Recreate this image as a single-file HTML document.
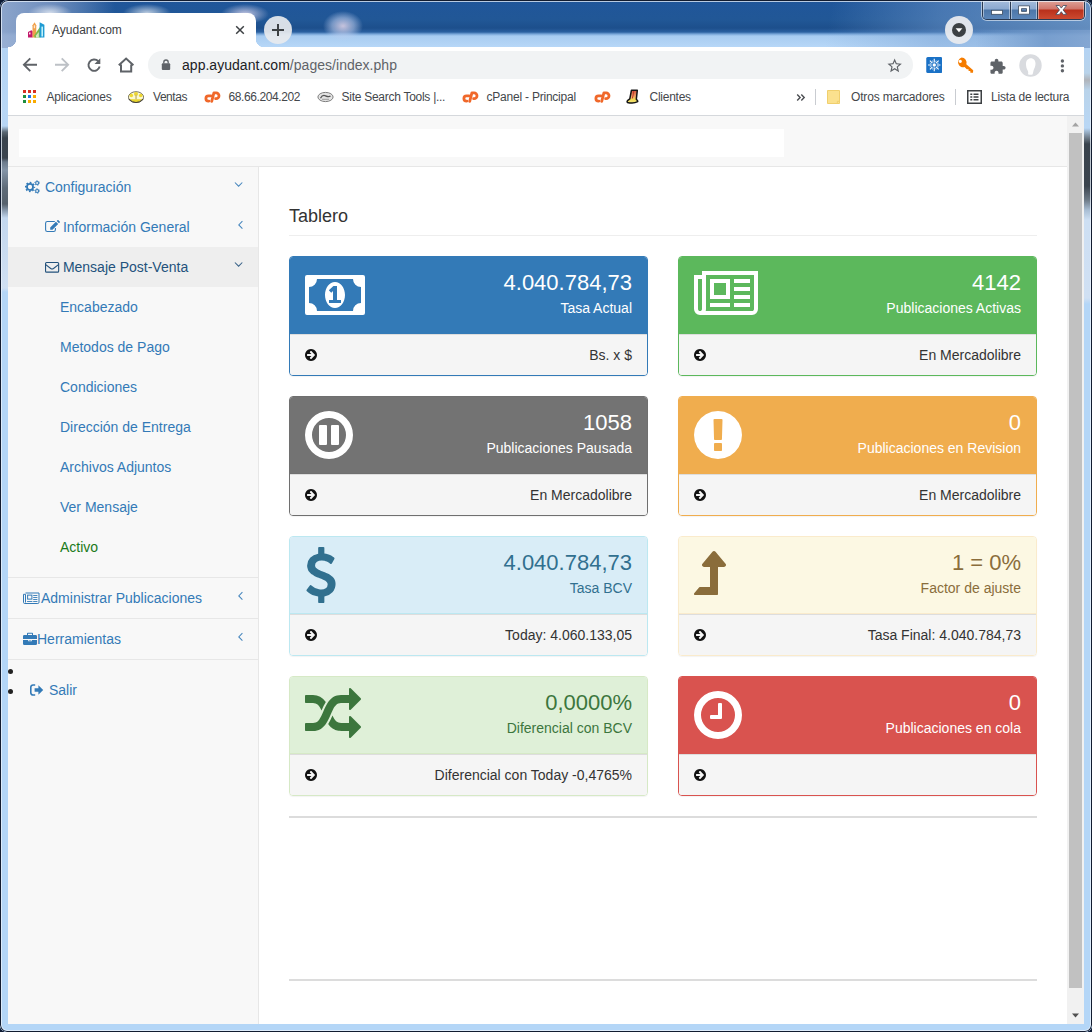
<!DOCTYPE html>
<html lang="es">
<head>
<meta charset="utf-8">
<title>Ayudant.com</title>
<style>
*{box-sizing:border-box}
html,body{margin:0;padding:0}
body{width:1092px;height:1032px;overflow:hidden;position:relative;background:#0d1a33;font-family:"Liberation Sans",sans-serif;font-size:14px;line-height:20px;color:#333}
ul{margin:0;padding:0}
a{text-decoration:none;color:#337ab7}
.abs{position:absolute}
/* ---------- window frame ---------- */
#frame{position:absolute;left:0;top:0;width:1092px;height:1032px;background:#b9d6f4;border-radius:8px 8px 7px 7px;overflow:hidden}
#fline{position:absolute;left:0;top:0;width:1092px;height:1032px;border-radius:8px 8px 7px 7px;box-shadow:inset 0 0 0 1px #121c30,inset 0 0 0 2px rgba(235,243,252,.75);pointer-events:none}
#title{position:absolute;left:0;top:0;width:1092px;height:48px;
 background:
  radial-gradient(ellipse 20px 15px at 343px 26px,rgba(228,215,235,.85) 0,rgba(190,205,238,.55) 55%,rgba(190,205,235,0) 100%),
  radial-gradient(ellipse 22px 9px at 50px 13px,rgba(255,255,255,.7) 0,rgba(255,255,255,0) 100%),
  radial-gradient(ellipse 24px 9px at 147px 13px,rgba(255,255,255,.7) 0,rgba(255,255,255,0) 100%),
  radial-gradient(ellipse 24px 10px at 245px 14px,rgba(250,235,250,.75) 0,rgba(255,255,255,0) 100%),
  linear-gradient(to right,rgba(150,172,208,.92) 0,rgba(125,152,196,.82) 55px,rgba(120,150,195,.45) 85px,rgba(120,150,200,0) 115px),
  linear-gradient(to right,rgba(110,150,200,0) 0,rgba(110,150,200,.8) 70px,rgba(125,160,205,.8) 100%) no-repeat 975px 30px / 117px 18px,
  linear-gradient(100deg,rgba(120,160,210,0) 820px,rgba(120,160,210,.45) 930px,rgba(150,185,225,.6) 1092px),
  linear-gradient(to bottom,#1b4d8b 0,#20569a 3px,#215796 20px,#1d4f8c 28px,#2a60a0 32px,#76a4d7 34px,#a8ccf1 36px,#b8d8f8 48px)}
#edgeL,#edgeR{position:absolute;top:48px;width:8px;height:984px}
#edgeL{left:0;background:linear-gradient(to bottom,#b3d3f4 0,#b9d7f5 60px,#b7d5f4 78px,#5b6874 84px,#39434d 90px,#3b444e 110px,#6b7a8b 114px,#8494a7 122px,#5f6b78 140px,#56616c 156px,#8e9fb3 163px,#c3d7ee 170px,#d0e0f3 240px,#b4d6f7 244px,#b4d6f7 100%)}
#edgeR{left:1084px;background:linear-gradient(to bottom,#b3d3f4 0,#b9d3ea 25px,#b0b4ba 32px,#b9d3ea 42px,#b9d7f5 80px,#6d7a87 90px,#39434d 96px,#3b444e 138px,#6d7a87 152px,#a8bdd3 162px,#cddff3 172px,#d0e0f3 250px,#b4d6f7 256px,#b4d6f7 100%)}
#edgeB{position:absolute;left:0;top:1024px;width:1092px;height:8px;background:#b4d6f7}
/* ---------- chrome ui ---------- */
#tab{position:absolute;left:16px;top:13px;width:240px;height:34px;background:#fff;border-radius:8px 8px 0 0}
#tab:before,#tab:after{content:"";position:absolute;bottom:0;width:8px;height:8px}
#tab:before{left:-8px;background:radial-gradient(circle at 0 0,transparent 8px,#fff 8.5px)}
#tab:after{right:-8px;background:radial-gradient(circle at 100% 0,transparent 8px,#fff 8.5px)}
#toolbar{position:absolute;left:8px;top:47px;width:1076px;height:69px;background:#fff;border-bottom:1px solid #d5d8dc}
.ui{font-family:"Liberation Sans",sans-serif;font-size:12px;line-height:16px;color:#44474b;white-space:nowrap;position:absolute}
#omni{position:absolute;left:148px;top:51px;width:765px;height:28px;border-radius:14px;background:#f1f3f4}
/* ---------- page ---------- */
#page{position:absolute;left:8px;top:116px;width:1059px;height:908px;background:#fff;overflow:hidden}
#sbar{position:absolute;left:1067px;top:116px;width:17px;height:908px;background:#f1f1f1}
#thumb{position:absolute;left:2px;top:17px;width:13px;height:855px;background:#c1c1c1}
#navbar{position:absolute;left:0;top:0;width:1059px;height:51px;background:#f8f8f8;border-bottom:1px solid #e7e7e7}
#brand{position:absolute;left:11px;top:13px;width:765px;height:28px;background:#fff}
#side{position:absolute;left:0;top:51px;width:251px;height:857px;background:#f8f8f8;border-right:1px solid #e7e7e7}
#main{position:absolute;left:251px;top:51px;width:808px;height:857px;background:#fff}

/* ---------- sidebar ---------- */
#side a{display:block;position:absolute;left:0;width:250px;height:40px;padding:10px 15px;line-height:20px;color:#337ab7;white-space:nowrap}
#side a.l2{padding-left:37px}
#side a.l3{padding-left:52px}
#side a.act{background:#eee;color:#23527c}
#side .ln{position:absolute;left:0;width:250px;height:1px;background:#e7e7e7}
#side svg{display:inline-block;vertical-align:top;fill:currentColor}
#side .fw{display:inline-block;width:18px;height:20px;text-align:center;vertical-align:top}
#side .arr{position:absolute;right:15px;top:10px;height:20px;text-align:right}
#side .dot{position:absolute;left:0;width:5px;height:5px;border-radius:50%;background:#222}
/* ---------- main ---------- */
#main h1{position:absolute;left:30px;top:39px;margin:0;width:748px;height:30px;font-size:18px;font-weight:normal;line-height:20px;color:#333;border-bottom:1px solid #eee;padding:0 0 9px}
.panel{position:absolute;width:359px;height:120px;border:1px solid;border-radius:4px;overflow:hidden;box-shadow:0 1px 1px rgba(0,0,0,.05)}
.ph{position:absolute;left:0;top:0;width:357px;height:77px;border-bottom:1px solid}
.pf{position:absolute;left:0;top:77px;width:357px;height:41px;background:#f5f5f5;border-top:1px solid #ddd;color:#333}
.pf span{position:absolute;right:15px;top:10px;line-height:20px;white-space:nowrap}
.pf svg{position:absolute;left:15px;top:14px}
.ph .huge{position:absolute;right:15px;top:10px;font-size:22px;line-height:31px;white-space:nowrap}
.ph .lbl{position:absolute;right:15px;top:41px;line-height:20px;white-space:nowrap}
.ph svg{position:absolute;fill:currentColor}
.hr{position:absolute;left:30px;width:748px;height:2px;background:#dcdcdc}

.ic{position:absolute;display:block}
.bm{top:89.3px}
.sep{position:absolute;top:89px;width:1px;height:16px;background:#c9ccd1}
#newtab{position:absolute;left:264px;top:16px;width:28px;height:28px;border-radius:50%;background:rgba(232,234,238,.92)}
#prof{position:absolute;left:945px;top:16px;width:28px;height:28px;border-radius:50%;background:rgba(232,234,238,.95)}
#wc{position:absolute;left:982px;top:0;width:103px;height:20px;border:1px solid #2a3a52;border-top:0;border-radius:0 0 5px 5px;box-shadow:0 0 0 1px rgba(255,255,255,.55);overflow:hidden}
#wc div{position:absolute;top:0;height:19px}
#wc .b1{left:0;width:28px;background:linear-gradient(to bottom,#a7bedd 0,#8ba9d0 9px,#4d76a8 10px,#5b86b9 19px);border-right:1px solid #2a3a52;box-shadow:inset 1px 0 0 rgba(255,255,255,.45),inset -1px 0 0 rgba(255,255,255,.45)}
#wc .b2{left:28px;width:27px;background:linear-gradient(to bottom,#a7bedd 0,#8ba9d0 9px,#4d76a8 10px,#5b86b9 19px);border-right:1px solid #2a3a52;box-shadow:inset 1px 0 0 rgba(255,255,255,.45),inset -1px 0 0 rgba(255,255,255,.45)}
#wc .b3{left:55px;width:46px;background:linear-gradient(to bottom,#e0a79d 0,#d0756a 9px,#b9301b 10px,#cc4a30 19px);box-shadow:inset 1px 0 0 rgba(255,255,255,.45),inset -1px 0 0 rgba(255,255,255,.35)}
</style>
</head>
<body>
<div id="frame">
 <div id="title"></div>
 <div id="edgeL"></div><div id="edgeR"></div><div id="edgeB"></div>
 <div id="tab"></div>
 <div id="toolbar"></div>
 <div id="omni"></div>

 <!-- tab -->
 <svg class="ic" style="left:28px;top:22px" width="17" height="16" viewBox="0 0 17 16"><path d="M0 15.500V10L3.400 8.200L4.700 9.300V15.500z" fill="#c2186b"/><rect x="1" y="10.500" width="1.500" height="1.900" fill="#fbe3ee"/><path d="M4.500 15.500V3.300L6.600 .3L8.300 3.300V15.500z" fill="#f0a04b"/><path d="M5.800 3.300h1.300v3h-1.300z" fill="#fbe6cf"/><path d="M6.400 15.500V13.300L11.700 5.300L12.500 6V15.500z" fill="#7cb945"/><path d="M8 15.500V13.500L10.800 10V15.500z" fill="#d3e9bf"/><path d="M11.600 15.500V.3L16.400 2.800V15.500z" fill="#1f9bd3"/><rect x="13.400" y="4.600" width="1.600" height="9.900" fill="#bff2fb"/></svg>
 <span class="ui" style="left:52px;top:21.500px;color:#3c4043">Ayudant.com</span>
 <svg class="ic" style="left:235px;top:25px" width="10" height="10" viewBox="0 0 10 10"><path d="M1.200 1.200L8.800 8.800M8.800 1.200L1.200 8.800" stroke="#3c4043" stroke-width="1.500" fill="none"/></svg>
 <div id="newtab"><svg class="ic" style="left:7px;top:7px" width="14" height="14" viewBox="0 0 14 14"><path d="M7 1V13M1 7H13" stroke="#3c4043" stroke-width="2" fill="none"/></svg></div>
 <div id="prof"><svg class="ic" style="left:7px;top:7px" width="14" height="14" viewBox="0 0 14 14"><circle cx="7" cy="7" r="7" fill="#3c4043"/><path d="M3.600 5.200H10.400L7 9.300z" fill="#fff"/></svg></div>
 <div id="wc"><div class="b1"></div><div class="b2"></div><div class="b3"></div>
  <svg class="ic" style="left:-1px;top:0" width="101" height="19" viewBox="0 0 101 19"><g stroke="#3b4a5e" stroke-width=".8" fill="#fff"><rect x="9.500" y="10.300" width="11" height="4"/><path fill-rule="evenodd" d="M36.500 5.800h11v8.400h-11zM39.500 8.600h5v2.800h-5z"/><path d="M74 5.500h3.400l1.900 2.600l1.900-2.600h3.400l-3.500 4.400l3.600 4.500h-3.500l-1.900-2.700l-1.900 2.700h-3.500l3.600-4.500z"/></g></svg>
 </div>
 <!-- nav buttons -->
 <svg class="ic" style="left:22px;top:57px" width="16" height="16" viewBox="0 0 16 16"><path d="M15 7.700H2.600M8.300 1.300L1.900 7.700L8.300 14.100" fill="none" stroke="#5f6368" stroke-width="1.900"/></svg>
 <svg class="ic" style="left:54px;top:57px" width="16" height="16" viewBox="0 0 16 16"><path d="M1 7.700H13.400M7.700 1.300L14.100 7.700L7.700 14.100" fill="none" stroke="#bdc1c6" stroke-width="1.900"/></svg>
 <svg class="ic" style="left:86px;top:57px" width="16" height="16" viewBox="0 0 16 16"><path d="M12.300 4.200A5.700 5.700 0 1 0 13.700 9.600" fill="none" stroke="#5f6368" stroke-width="1.900"/><path d="M14.300 1.300V7.100H8.500z" fill="#5f6368"/></svg>
 <svg class="ic" style="left:117px;top:56px" width="18" height="18" viewBox="0 0 18 18"><path fill="none" stroke="#5f6368" stroke-width="2" stroke-linejoin="miter" d="M1.800 9.300L9.100 2.600L16.400 9.300M4 8.500V15.600H14.200V8.500"/></svg>
 <!-- omnibox content -->
 <svg class="ic" style="left:161px;top:59px" width="10" height="12" viewBox="0 0 10 12"><path fill="#5f6368" d="M1.800 4.300h6.400q1 0 1 1v4.800q0 1-1 1h-6.400q-1 0-1-1v-4.800q0-1 1-1z"/><path d="M2.800 4.600V3.200a2.200 2.200 0 0 1 4.400 0v1.400" fill="none" stroke="#5f6368" stroke-width="1.300"/></svg>
 <span class="ui" style="left:182px;top:56.500px;font-size:14px;color:#202124;letter-spacing:.03px">app.ayudant.com<span style="color:#5f6368">/pages/index.php</span></span>
 <svg class="ic" style="left:885.500px;top:57px" width="17.300" height="17.300" viewBox="0 0 24 24"><path fill="#5f6368" d="M22 9.240l-7.190-.62L12 2 9.190 8.630 2 9.240l5.460 4.730L5.820 21 12 17.270 18.180 21l-1.630-7.030L22 9.240zM12 15.400l-3.760 2.270 1-4.280-3.320-2.880 4.380-.38L12 6.100l1.710 4.040 4.380.38-3.320 2.880 1 4.280L12 15.400z"/></svg>
 <!-- extensions -->
 <svg class="ic" style="left:925.500px;top:57px" width="16.500" height="16" viewBox="0 0 16 16"><rect width="16" height="16" rx="1.500" fill="#1a71c6"/><path d="M10.60 8.00L14.20 8.00M9.84 9.84L12.38 12.38M8.00 10.60L8.00 14.20M6.16 9.84L3.62 12.38M5.40 8.00L1.80 8.00M6.16 6.16L3.62 3.62M8.00 5.40L8.00 1.80M9.84 6.16L12.38 3.62" stroke="#fff" stroke-width="1.100" fill="none"/><path d="M10.59 9.07L12.62 9.91M9.07 10.59L9.91 12.62M6.93 10.59L6.09 12.62M5.41 9.07L3.38 9.91M5.41 6.93L3.38 6.09M6.93 5.41L6.09 3.38M9.07 5.41L9.91 3.38M10.59 6.93L12.62 6.09" stroke="#cfe3f7" stroke-width=".7" fill="none"/><circle cx="8" cy="8" r="1.700" fill="#fff"/></svg>
 <svg class="ic" style="left:956px;top:57px" width="18" height="17" viewBox="0 0 18 17"><path fill="#f57c00" d="M5.600 0.500a5 5 0 0 1 4.700 6.700l6.900 6.100l-.2 2.400l-2.600.1l-.1-1.700l-1.700-.1l-.1-1.700l-1.700-.1L8.600 10.100A5 5 0 1 1 5.600 .5zM4.300 2.700a1.600 1.600 0 1 0 0 3.200a1.600 1.600 0 1 0 0-3.200z" fill-rule="evenodd"/></svg>
 <svg class="ic" style="left:989px;top:57.800px" width="17.300" height="17.300" viewBox="0 0 24 24"><path fill="#5f6368" d="M20.500 11H19V7c0-1.100-.9-2-2-2h-4V3.500C13 2.120 11.880 1 10.500 1S8 2.120 8 3.500V5H4c-1.100 0-1.990.9-1.990 2v3.800H3.500c1.490 0 2.700 1.210 2.700 2.700s-1.210 2.700-2.700 2.700H2V20c0 1.100.9 2 2 2h3.800v-1.500c0-1.490 1.210-2.700 2.700-2.700 1.490 0 2.700 1.210 2.700 2.700V22H17c1.100 0 2-.9 2-2v-4h1.500c1.380 0 2.500-1.120 2.500-2.500S21.880 11 20.500 11z"/></svg>
 <svg class="ic" style="left:1018.500px;top:54px" width="23" height="23" viewBox="0 0 23 23"><circle cx="11.500" cy="11.500" r="11.200" fill="#d9dbdf"/><path fill="#fff" d="M11.900 4.300c2.800 0 4.600 2.300 4.600 5.500c0 2.700-1.100 4.500-1.700 5.900c-.5 1.400-.5 3-1.300 4.700q-2.200.8-4.600-.2c.7-1.400.2-3-.5-4.300C7.600 14.400 7 12.600 7 9.900C7 6.500 9.100 4.300 11.900 4.300z"/></svg>
 <svg class="ic" style="left:1060px;top:58.500px" width="5" height="14" viewBox="0 0 5 14"><circle cx="2.400" cy="2" r="1.700" fill="#5f6368"/><circle cx="2.400" cy="6.900" r="1.700" fill="#5f6368"/><circle cx="2.400" cy="11.800" r="1.700" fill="#5f6368"/></svg>
 <!-- bookmarks bar -->
 <svg class="ic" style="left:23px;top:90px" width="13" height="13" viewBox="0 0 13 13"><g><rect x="0" y="0" width="3" height="3" fill="#d93025"/><rect x="5" y="0" width="3" height="3" fill="#d93025"/><rect x="10" y="0" width="3" height="3" fill="#d93025"/><rect x="0" y="5" width="3" height="3" fill="#1e8e3e"/><rect x="5" y="5" width="3" height="3" fill="#1a73e8"/><rect x="10" y="5" width="3" height="3" fill="#f9ab00"/><rect x="0" y="10" width="3" height="3" fill="#1e8e3e"/><rect x="5" y="10" width="3" height="3" fill="#f9ab00"/><rect x="10" y="10" width="3" height="3" fill="#f9ab00"/></g></svg>
 <span class="ui bm" style="left:46.500px;letter-spacing:-.19px">Aplicaciones</span>
 <svg class="ic" style="left:128px;top:90.700px" width="16" height="12.400" viewBox="0 0 16 12.400"><ellipse cx="8" cy="6.200" rx="7.600" ry="5.500" fill="#fbf8d2" stroke="#6b6750" stroke-width=".9"/><path d="M1.300 8.300Q8 14.500 14.700 8.300z" fill="#e8d52c"/><circle cx="3.300" cy="4.500" r="1.800" fill="#f0d92f"/><circle cx="8" cy="2.900" r="2" fill="#f0d92f"/><circle cx="12.700" cy="4.500" r="1.800" fill="#f0d92f"/><rect x="7.300" y="3.600" width="1.500" height="4.700" fill="#c7b977"/><path d="M.9 8.200Q8 14.900 15.100 8.200" fill="none" stroke="#3d3a3a" stroke-width="1"/></svg>
 <span class="ui bm" style="left:153px;letter-spacing:-.45px">Ventas</span>
 <svg class="ic" style="left:203.500px;top:90.800px" width="17" height="12" viewBox="0 0 17 12"><g fill="none" stroke="#f0682a" stroke-width="2.800" stroke-linecap="round" stroke-linejoin="round"><path d="M7 4.900H4.500A2.600 2.600 0 0 0 4.500 10.100H4.900"/><path d="M7.700 10.400L9.900 1.900H12.100A2.900 2.900 0 0 1 12.100 7.700H11.600"/></g></svg>
 <span class="ui bm" style="left:228.500px;letter-spacing:-.4px">68.66.204.202</span>
 <svg class="ic" style="left:317px;top:91px" width="17" height="12" viewBox="0 0 17 12"><ellipse cx="8.500" cy="6" rx="7.600" ry="4.600" fill="#e4e4e4" stroke="#7d7d7d" stroke-width="1"/><path d="M3.500 7.200q2-3.800 5-2.400t5 .4" fill="none" stroke="#555" stroke-width="1.300"/><path d="M5 8.300h7" stroke="#888" stroke-width=".8"/></svg>
 <span class="ui bm" style="left:341.500px;letter-spacing:-.27px">Site Search Tools |...</span>
 <svg class="ic" style="left:461.500px;top:90.800px" width="17" height="12" viewBox="0 0 17 12"><g fill="none" stroke="#f0682a" stroke-width="2.800" stroke-linecap="round" stroke-linejoin="round"><path d="M7 4.900H4.500A2.600 2.600 0 0 0 4.500 10.100H4.900"/><path d="M7.700 10.400L9.900 1.900H12.100A2.900 2.900 0 0 1 12.100 7.700H11.600"/></g></svg>
 <span class="ui bm" style="left:486.500px;letter-spacing:-.22px">cPanel - Principal</span>
 <svg class="ic" style="left:593.500px;top:90.800px" width="17" height="12" viewBox="0 0 17 12"><g fill="none" stroke="#f0682a" stroke-width="2.800" stroke-linecap="round" stroke-linejoin="round"><path d="M7 4.900H4.500A2.600 2.600 0 0 0 4.500 10.100H4.900"/><path d="M7.700 10.400L9.900 1.900H12.100A2.900 2.900 0 0 1 12.100 7.700H11.600"/></g></svg>
 <svg class="ic" style="left:626px;top:89px" width="13" height="15.500" viewBox="0 0 13 15.500"><defs><linearGradient id="cl" x1="0" y1="0" x2="0" y2="1"><stop offset="0" stop-color="#d4503c"/><stop offset=".5" stop-color="#f0a868"/><stop offset=".72" stop-color="#f3dc55"/><stop offset="1" stop-color="#efe27a"/></linearGradient></defs><path d="M5.400 1.300H11.300L10.300 10.300Q12 11.300 11.700 12.700Q7.500 15 1.400 13.400Q.7 12.300 1.800 11.300L3.800 9.900z" fill="url(#cl)" stroke="#151515" stroke-width="1.500" stroke-linejoin="round"/><path d="M7.600 2.200Q7.400 6 6.300 9.500" stroke="#c0392b" stroke-width="1" fill="none"/></svg>
 <span class="ui bm" style="left:649.500px;letter-spacing:-.25px">Clientes</span>
 <svg class="ic" style="left:796px;top:93.500px" width="10" height="7" viewBox="0 0 10 7"><path d="M1.200 .6L4.100 3.500L1.200 6.400M5.300 .6L8.200 3.500L5.300 6.400" fill="none" stroke="#4a4d51" stroke-width="1.400"/></svg>
 <div class="sep" style="left:815px"></div>
 <svg class="ic" style="left:827px;top:90px" width="14" height="14" viewBox="0 0 14 14"><path d="M.5 .5H12.500V13.500H.5z" fill="#fbe18e" stroke="#f0cf6d" stroke-width="1"/><path d="M10.300 13.500V11.300H12.500" fill="none" stroke="#f0cf6d" stroke-width="1"/></svg>
 <span class="ui bm" style="left:851px;letter-spacing:-.15px">Otros marcadores</span>
 <div class="sep" style="left:955px"></div>
 <svg class="ic" style="left:967px;top:90px" width="15" height="14" viewBox="0 0 15 14"><rect x=".75" y=".75" width="13.500" height="12.500" fill="#fff" stroke="#3c4043" stroke-width="1.500"/><path d="M3.300 4.200h2M6.500 4.200h5M3.300 7h2M6.500 7h5M3.300 9.800h2M6.500 9.800h5" stroke="#3c4043" stroke-width="1.400"/></svg>
 <span class="ui bm" style="left:991px;letter-spacing:-.19px">Lista de lectura</span>
 <div id="page">
  <div id="navbar"><div id="brand"></div></div>
  <div id="side">
   <a style="top:0" href="#"><span class="fw"><svg width="15" height="20" viewBox="0 0 15 20"><g fill="none" stroke="currentColor"><circle cx="5" cy="10" r="3.050" stroke-width="1.800"/><circle cx="5" cy="10" r="4.400" stroke-width="1.500" stroke-dasharray="1.700 1.756" stroke-dashoffset=".85"/><circle cx="12.100" cy="6" r="1.450" stroke-width="1.100"/><circle cx="12.100" cy="6" r="2.300" stroke-width="1" stroke-dasharray="1.100 1.309" stroke-dashoffset=".55"/><circle cx="12.100" cy="14" r="1.450" stroke-width="1.100"/><circle cx="12.100" cy="14" r="2.300" stroke-width="1" stroke-dasharray="1.100 1.309" stroke-dashoffset=".55"/></g></svg></span> Configuración<span class="arr"><svg width="9" height="20" viewBox="0 0 9 20"><path d="M.9 5.500L4.600 9.200L8.300 5.500" fill="none" stroke="currentColor" stroke-width="1.050" opacity=".9"/></svg></span></a>
   <a class="l2" style="top:40px" href="#"><span class="fw" style="width:14px;text-align:left"><svg width="15" height="20" viewBox="0 0 15 20"><path d="M9.800 4.500H2.400a1.800 1.800 0 0 0-1.800 1.800v6.400a1.800 1.800 0 0 0 1.800 1.800h6.200a1.800 1.800 0 0 0 1.800-1.800V11" fill="none" stroke="currentColor" stroke-width="1.100"/><path d="M5.200 12.700v-2.300l5.700-5.700l2.300 2.300l-5.700 5.700zM11.700 3.900l.7-.7a.8.800 0 0 1 1.100 0l1.200 1.200a.8.800 0 0 1 0 1.100l-.7.700z"/></svg></span> Información General<span class="arr"><svg width="5" height="20" viewBox="0 0 5 20"><path d="M4.400 4.200L.8 7.900L4.400 11.600" fill="none" stroke="currentColor" stroke-width="1.050" opacity=".9"/></svg></span></a>
   <a class="l2 act" style="top:80px" href="#"><span class="fw" style="width:14px;text-align:left"><svg width="15" height="20" viewBox="0 0 15 20"><rect x=".55" y="5.550" width="13.100" height="9.600" rx="1" fill="none" stroke="currentColor" stroke-width="1.100"/><path d="M.7 7.600L5.700 11.500q1.400 1 2.800 0L13.500 7.600" fill="none" stroke="currentColor" stroke-width="1.100"/></svg></span> Mensaje Post-Venta<span class="arr"><svg width="9" height="20" viewBox="0 0 9 20"><path d="M.9 5.500L4.600 9.200L8.300 5.500" fill="none" stroke="currentColor" stroke-width="1.050" opacity=".9"/></svg></span></a>
   <a class="l3" style="top:120px" href="#">Encabezado</a>
   <a class="l3" style="top:160px" href="#">Metodos de Pago</a>
   <a class="l3" style="top:200px" href="#">Condiciones</a>
   <a class="l3" style="top:240px" href="#">Dirección de Entrega</a>
   <a class="l3" style="top:280px" href="#">Archivos Adjuntos</a>
   <a class="l3" style="top:320px" href="#">Ver Mensaje</a>
   <a class="l3" style="top:360px;color:#1a7a1a" href="#">Activo</a>
   <div class="ln" style="top:410px"></div>
   <a style="top:411px" href="#"><span class="fw" style="text-align:left"><svg width="17" height="20" viewBox="0 0 17 20"><g fill="none" stroke="currentColor" stroke-width="1"><path d="M2.500 5H16v9.300q0 1.200-1.200 1.200H1.700q-1.200 0-1.200-1.200V6.300H2.500V14.500"/><rect x="4.600" y="7.100" width="4.300" height="4"/><path d="M10.200 7.500h4.200M10.200 9.500h4.200M10.200 11.500h4.200M10.200 13.500h4.200M4.100 13.500h5.300" stroke-width=".9"/></g></svg></span>Administrar Publicaciones<span class="arr"><svg width="5" height="20" viewBox="0 0 5 20"><path d="M4.400 4.200L.8 7.900L4.400 11.600" fill="none" stroke="currentColor" stroke-width="1.050" opacity=".9"/></svg></span></a>
   <div class="ln" style="top:451px"></div>
   <a style="top:452px" href="#"><span class="fw" style="width:14px"><svg width="14" height="20" viewBox="0 0 14 20"><path fill-rule="evenodd" d="M4 6V4.6q0-.8.8-.8h4.4q.8 0 .8.8V6h2.7q1.3 0 1.3 1.3V10H0V7.300q0-1.3 1.300-1.300zM5 6h4V4.800H5zM0 11h5.200v1.300h3.600V11H14v3.700q0 1.300-1.300 1.300H1.300Q0 16 0 14.700zM6 11h2v.600H6z"/></svg></span>Herramientas<span class="arr"><svg width="5" height="20" viewBox="0 0 5 20"><path d="M4.400 4.200L.8 7.900L4.400 11.600" fill="none" stroke="currentColor" stroke-width="1.050" opacity=".9"/></svg></span></a>
   <div class="ln" style="top:492px"></div>
   <div class="dot" style="top:501.5px"></div>
   <div class="dot" style="top:521.5px"></div>
   <a style="top:503px;padding:10px 20px" href="#"><span class="fw"><svg width="14" height="20" viewBox="0 0 14 20"><path d="M5.2 5H3a2.2 2.200 0 0 0-2.200 2.200v5.600A2.200 2.200 0 0 0 3 15h2.200" fill="none" stroke="currentColor" stroke-width="1.6"/><path d="M4.600 8.200h3.800V5.300L13.200 10L8.400 14.700V11.800H4.600z"/></svg></span><span style="margin-left:3px">Salir</span></a>
  </div>
  <div id="main"><h1>Tablero</h1>
   <div class="panel" style="left:30px;top:89px;border-color:#337ab7">
    <div class="ph" style="border-bottom-color:#337ab7;background:#337ab7;color:#fff"><svg style="left:15px;top:18px" width="60" height="40" viewBox="0 0 1920 1280"><path fill-rule="evenodd" d="M64 0H1856a64 64 0 0 1 64 64V1216a64 64 0 0 1-64 64H64a64 64 0 0 1-64-64V64A64 64 0 0 1 64 0zM384 128H1536a256 256 0 0 0 256 256V896a256 256 0 0 0-256 256H384A256 256 0 0 0 128 896V384A256 256 0 0 0 384 128zM960 224c177 0 320 186 320 416s-143 416-320 416s-320-186-320-416s143-416 320-416zM768 896h384v-96h-128v-448h-114l-148 137l77 80q42-37 55-57h2v288h-128z"/></svg><div class="huge">4.040.784,73</div><div class="lbl">Tasa Actual</div></div>
    <div class="pf"><svg width="12" height="12" viewBox="0 0 1536 1536"><path fill="#111" transform="translate(0,1408) scale(1,-1)" d="M1285 640q0 27 -18 45l-91 91l-362 362q-18 18 -45 18t-45 -18l-91 -91q-18 -18 -18 -45t18 -45l189 -189h-502q-26 0 -45 -19t-19 -45v-128q0 -26 19 -45t45 -19h502l-189 -189q-19 -19 -19 -45t19 -45l91 -91q18 -18 45 -18t45 18l362 362l91 91q18 18 18 45zM1536 640q0 -209 -103 -385.5t-279.5 -279.5t-385.5 -103t-385.5 103t-279.5 279.5t-103 385.5t103 385.5t279.5 279.5t385.5 103t385.5 -103t279.5 -279.5t103 -385.5z"/></svg><span>Bs. x $</span></div>
   </div>
   <div class="panel" style="left:419px;top:89px;border-color:#5cb85c">
    <div class="ph" style="border-bottom-color:#5cb85c;background:#5cb85c;color:#fff"><svg style="left:15px;top:14px" width="64" height="44" viewBox="0 0 2048 1408"><path transform="translate(0,1408) scale(1,-1)"  d="M1024 1024h-384v-384h384v384zM1152 384v-128h-640v128h640zM1152 1152v-640h-640v640h640zM1792 384v-128h-512v128h512zM1792 640v-128h-512v128h512zM1792 896v-128h-512v128h512zM1792 1152v-128h-512v128h512zM256 192v960h-128v-960q0 -26 19 -45t45 -19t45 19t19 45zM1920 192v1088h-1536v-1088q0 -33 -11 -64h1483q26 0 45 19t19 45zM2048 1408v-1216q0 -80 -56 -136t-136 -56h-1664q-80 0 -136 56t-56 136v1088h256v128h1792z"/></svg><div class="huge">4142</div><div class="lbl">Publicaciones Activas</div></div>
    <div class="pf"><svg width="12" height="12" viewBox="0 0 1536 1536"><path fill="#111" transform="translate(0,1408) scale(1,-1)" d="M1285 640q0 27 -18 45l-91 91l-362 362q-18 18 -45 18t-45 -18l-91 -91q-18 -18 -18 -45t18 -45l189 -189h-502q-26 0 -45 -19t-19 -45v-128q0 -26 19 -45t45 -19h502l-189 -189q-19 -19 -19 -45t19 -45l91 -91q18 -18 45 -18t45 18l362 362l91 91q18 18 18 45zM1536 640q0 -209 -103 -385.5t-279.5 -279.5t-385.5 -103t-385.5 103t-279.5 279.5t-103 385.5t103 385.5t279.5 279.5t385.5 103t385.5 -103t279.5 -279.5t103 -385.5z"/></svg><span>En Mercadolibre</span></div>
   </div>
   <div class="panel" style="left:30px;top:229px;border-color:#6f6f6f">
    <div class="ph" style="border-bottom-color:#6f6f6f;background:#737373;color:#fff"><svg style="left:15px;top:14px" width="48" height="48" viewBox="0 0 1536 1536"><path fill-rule="evenodd" d="M768 0a768 768 0 1 0 0 1536a768 768 0 1 0 0-1536zM768 224a544 544 0 1 1 0 1088a544 544 0 1 1 0-1088zM480 448h192q32 0 32 32v576q0 32-32 32h-192q-32 0-32-32v-576q0-32 32-32zM864 448h192q32 0 32 32v576q0 32-32 32h-192q-32 0-32-32v-576q0-32 32-32z"/></svg><div class="huge">1058</div><div class="lbl">Publicaciones Pausada</div></div>
    <div class="pf"><svg width="12" height="12" viewBox="0 0 1536 1536"><path fill="#111" transform="translate(0,1408) scale(1,-1)" d="M1285 640q0 27 -18 45l-91 91l-362 362q-18 18 -45 18t-45 -18l-91 -91q-18 -18 -18 -45t18 -45l189 -189h-502q-26 0 -45 -19t-19 -45v-128q0 -26 19 -45t45 -19h502l-189 -189q-19 -19 -19 -45t19 -45l91 -91q18 -18 45 -18t45 18l362 362l91 91q18 18 18 45zM1536 640q0 -209 -103 -385.5t-279.5 -279.5t-385.5 -103t-385.5 103t-279.5 279.5t-103 385.5t103 385.5t279.5 279.5t385.5 103t385.5 -103t279.5 -279.5t103 -385.5z"/></svg><span>En Mercadolibre</span></div>
   </div>
   <div class="panel" style="left:419px;top:229px;border-color:#f0ad4e">
    <div class="ph" style="border-bottom-color:#f0ad4e;background:#f0ad4e;color:#fff"><svg style="left:15px;top:14px" width="48" height="48" viewBox="0 0 1536 1536"><path transform="translate(0,1408) scale(1,-1)"  d="M768 1408q209 0 385.5 -103t279.5 -279.5t103 -385.5t-103 -385.5t-279.5 -279.5t-385.5 -103t-385.5 103t-279.5 279.5t-103 385.5t103 385.5t279.5 279.5t385.5 103zM896 161v190q0 14 -9 23.5t-22 9.5h-192q-13 0 -23 -10t-10 -23v-190q0 -13 10 -23t23 -10h192q13 0 22 9.5t9 23.5zM894 505l18 621q0 12 -10 18q-10 8 -24 8h-220q-14 0 -24 -8q-10 -6 -10 -18l17 -621q0 -10 10 -17.5t24 -7.5h185q14 0 23.5 7.5t10.5 17.5z"/></svg><div class="huge">0</div><div class="lbl">Publicaciones en Revision</div></div>
    <div class="pf"><svg width="12" height="12" viewBox="0 0 1536 1536"><path fill="#111" transform="translate(0,1408) scale(1,-1)" d="M1285 640q0 27 -18 45l-91 91l-362 362q-18 18 -45 18t-45 -18l-91 -91q-18 -18 -18 -45t18 -45l189 -189h-502q-26 0 -45 -19t-19 -45v-128q0 -26 19 -45t45 -19h502l-189 -189q-19 -19 -19 -45t19 -45l91 -91q18 -18 45 -18t45 18l362 362l91 91q18 18 18 45zM1536 640q0 -209 -103 -385.5t-279.5 -279.5t-385.5 -103t-385.5 103t-279.5 279.5t-103 385.5t103 385.5t279.5 279.5t385.5 103t385.5 -103t279.5 -279.5t103 -385.5z"/></svg><span>En Mercadolibre</span></div>
   </div>
   <div class="panel" style="left:30px;top:369px;border-color:#bce8f1">
    <div class="ph" style="border-bottom-color:#bce8f1;background:#d9edf7;color:#31708f"><svg style="left:15px;top:10px" width="32" height="56" viewBox="0 0 1024 1792"><path transform="translate(0,1536) scale(1,-1)"  d="M978 351q0 -153 -99.5 -263.5t-258.5 -136.5v-175q0 -14 -9 -23t-23 -9h-135q-13 0 -22.5 9.5t-9.5 22.5v175q-66 9 -127.5 31t-101.5 44.5t-74 48t-46.5 37.5t-17.5 18q-17 21 -2 41l103 135q7 10 23 12q15 2 24 -9l2 -2q113 -99 243 -125q37 -8 74 -8q81 0 142.5 43t61.5 122q0 28 -15 53t-33.5 42t-58.5 37.5t-66 32t-80 32.5q-39 16 -61.5 25t-61.5 26.5t-62.5 31t-56.5 35.5t-53.5 42.5t-43.5 49t-35.5 58t-21 66.5t-8.5 78q0 138 98 242t255 134v180q0 13 9.5 22.5t22.5 9.5h135q14 0 23 -9t9 -23v-176q57 -6 110.5 -23t87 -33.5t63.5 -37.5t39 -29t15 -14q17 -18 5 -38l-81 -146q-8 -15 -23 -16q-14 -3 -27 7q-3 3 -14.5 12t-39 26.5t-58.5 32t-74.5 26t-85.5 11.5q-95 0 -155 -43t-60 -111q0 -26 8.5 -48t29.5 -41.5t39.5 -33t56 -31t60.5 -27t70 -27.5q53 -20 81 -31.5t76 -35t75.5 -42.5t62 -50t53 -63.5t31.5 -76.5t13 -94z"/></svg><div class="huge">4.040.784,73</div><div class="lbl">Tasa BCV</div></div>
    <div class="pf"><svg width="12" height="12" viewBox="0 0 1536 1536"><path fill="#111" transform="translate(0,1408) scale(1,-1)" d="M1285 640q0 27 -18 45l-91 91l-362 362q-18 18 -45 18t-45 -18l-91 -91q-18 -18 -18 -45t18 -45l189 -189h-502q-26 0 -45 -19t-19 -45v-128q0 -26 19 -45t45 -19h502l-189 -189q-19 -19 -19 -45t19 -45l91 -91q18 -18 45 -18t45 18l362 362l91 91q18 18 18 45zM1536 640q0 -209 -103 -385.5t-279.5 -279.5t-385.5 -103t-385.5 103t-279.5 279.5t-103 385.5t103 385.5t279.5 279.5t385.5 103t385.5 -103t279.5 -279.5t103 -385.5z"/></svg><span>Today: 4.060.133,05</span></div>
   </div>
   <div class="panel" style="left:419px;top:369px;border-color:#faebcc">
    <div class="ph" style="border-bottom-color:#faebcc;background:#fcf8e3;color:#8a6d3b"><svg style="left:15px;top:10px" width="32" height="56" viewBox="0 0 1024 1792"><path transform="translate(0,1536) scale(1,-1)"  d="M1018 933q-18 -37 -58 -37h-192v-864q0 -14 -9 -23t-23 -9h-704q-21 0 -29 18q-8 20 4 35l160 192q9 11 25 11h320v640h-192q-40 0 -58 37q-17 37 9 68l320 384q18 22 49 22t49 -22l320 -384q27 -32 9 -68z"/></svg><div class="huge">1 = 0%</div><div class="lbl">Factor de ajuste</div></div>
    <div class="pf"><svg width="12" height="12" viewBox="0 0 1536 1536"><path fill="#111" transform="translate(0,1408) scale(1,-1)" d="M1285 640q0 27 -18 45l-91 91l-362 362q-18 18 -45 18t-45 -18l-91 -91q-18 -18 -18 -45t18 -45l189 -189h-502q-26 0 -45 -19t-19 -45v-128q0 -26 19 -45t45 -19h502l-189 -189q-19 -19 -19 -45t19 -45l91 -91q18 -18 45 -18t45 18l362 362l91 91q18 18 18 45zM1536 640q0 -209 -103 -385.5t-279.5 -279.5t-385.5 -103t-385.5 103t-279.5 279.5t-103 385.5t103 385.5t279.5 279.5t385.5 103t385.5 -103t279.5 -279.5t103 -385.5z"/></svg><span>Tasa Final: 4.040.784,73</span></div>
   </div>
   <div class="panel" style="left:30px;top:509px;border-color:#d6e9c6">
    <div class="ph" style="border-bottom-color:#d6e9c6;background:#dff0d8;color:#3c763d"><svg style="left:15px;top:10px" width="56" height="56" viewBox="0 0 1792 1792"><path transform="translate(0,1536) scale(1,-1)"  d="M666 1055q-60 -92 -137 -273q-22 45 -37 72.5t-40.5 63.5t-51 56.5t-63 35t-81.5 14.5h-224q-14 0 -23 9t-9 23v192q0 14 9 23t23 9h224q250 0 410 -225zM1792 256q0 -14 -9 -23l-320 -320q-9 -9 -23 -9q-13 0 -22.5 9.5t-9.5 22.5v192q-32 0 -85 -0.5t-81 -1t-73 1t-71 5t-64 10.5t-63 18.5t-58 28.5t-59 40t-55 53.5t-56 69.5q59 93 136 273q22 -45 37 -72.5t40.5 -63.5t51 -56.5t63 -35t81.5 -14.5h256v192q0 14 9 23t23 9q12 0 24 -10l319 -319q9 -9 9 -23zM1792 1152q0 -14 -9 -23l-320 -320q-9 -9 -23 -9q-13 0 -22.5 9.5t-9.5 22.5v192h-256q-48 0 -87 -15t-69 -45t-51 -61.5t-45 -77.5q-32 -62 -78 -171q-29 -66 -49.5 -111t-54 -105t-64 -100t-74 -83t-90 -68.5t-106.5 -42t-128 -16.5h-224q-14 0 -23 9t-9 23v192q0 14 9 23t23 9h224q48 0 87 15t69 45t51 61.5t45 77.5q32 62 78 171q29 66 49.5 111t54 105t64 100t74 83t90 68.5t106.5 42t128 16.5h256v192q0 14 9 23t23 9q12 0 24 -10l319 -319q9 -9 9 -23z"/></svg><div class="huge">0,0000%</div><div class="lbl">Diferencial con BCV</div></div>
    <div class="pf"><svg width="12" height="12" viewBox="0 0 1536 1536"><path fill="#111" transform="translate(0,1408) scale(1,-1)" d="M1285 640q0 27 -18 45l-91 91l-362 362q-18 18 -45 18t-45 -18l-91 -91q-18 -18 -18 -45t18 -45l189 -189h-502q-26 0 -45 -19t-19 -45v-128q0 -26 19 -45t45 -19h502l-189 -189q-19 -19 -19 -45t19 -45l91 -91q18 -18 45 -18t45 18l362 362l91 91q18 18 18 45zM1536 640q0 -209 -103 -385.5t-279.5 -279.5t-385.5 -103t-385.5 103t-279.5 279.5t-103 385.5t103 385.5t279.5 279.5t385.5 103t385.5 -103t279.5 -279.5t103 -385.5z"/></svg><span>Diferencial con Today -0,4765%</span></div>
   </div>
   <div class="panel" style="left:419px;top:509px;border-color:#d9534f">
    <div class="ph" style="border-bottom-color:#d9534f;background:#d9534f;color:#fff"><svg style="left:15px;top:14px" width="48" height="48" viewBox="0 0 1536 1536"><path fill-rule="evenodd" d="M768 0a768 768 0 1 0 0 1536a768 768 0 1 0 0-1536zM768 224a544 544 0 1 1 0 1088a544 544 0 1 1 0-1088zM800 384h64q32 0 32 32v448q0 32-32 32h-320q-32 0-32-32v-64q0-32 32-32h224v-352q0-32 32-32z"/></svg><div class="huge">0</div><div class="lbl">Publicaciones en cola</div></div>
    <div class="pf"><svg width="12" height="12" viewBox="0 0 1536 1536"><path fill="#111" transform="translate(0,1408) scale(1,-1)" d="M1285 640q0 27 -18 45l-91 91l-362 362q-18 18 -45 18t-45 -18l-91 -91q-18 -18 -18 -45t18 -45l189 -189h-502q-26 0 -45 -19t-19 -45v-128q0 -26 19 -45t45 -19h502l-189 -189q-19 -19 -19 -45t19 -45l91 -91q18 -18 45 -18t45 18l362 362l91 91q18 18 18 45zM1536 640q0 -209 -103 -385.5t-279.5 -279.5t-385.5 -103t-385.5 103t-279.5 279.5t-103 385.5t103 385.5t279.5 279.5t385.5 103t385.5 -103t279.5 -279.5t103 -385.5z"/></svg><span></span></div>
   </div>
   <div class="hr" style="top:649px"></div>
   <div class="hr" style="top:812px"></div>
  </div>
 </div>
 <div id="sbar"><div id="thumb"></div><svg class="ic" style="left:0;top:0" width="17" height="17" viewBox="0 0 17 17"><path d="M5 10.500L8.500 6.500L12 10.500z" fill="#a3a3a3"/></svg><svg class="ic" style="left:0;top:891px" width="17" height="17" viewBox="0 0 17 17"><path d="M5 6.500L8.500 10.500L12 6.500z" fill="#505050"/></svg></div>
 <div id="fline"></div>
</div>
</body>
</html>
